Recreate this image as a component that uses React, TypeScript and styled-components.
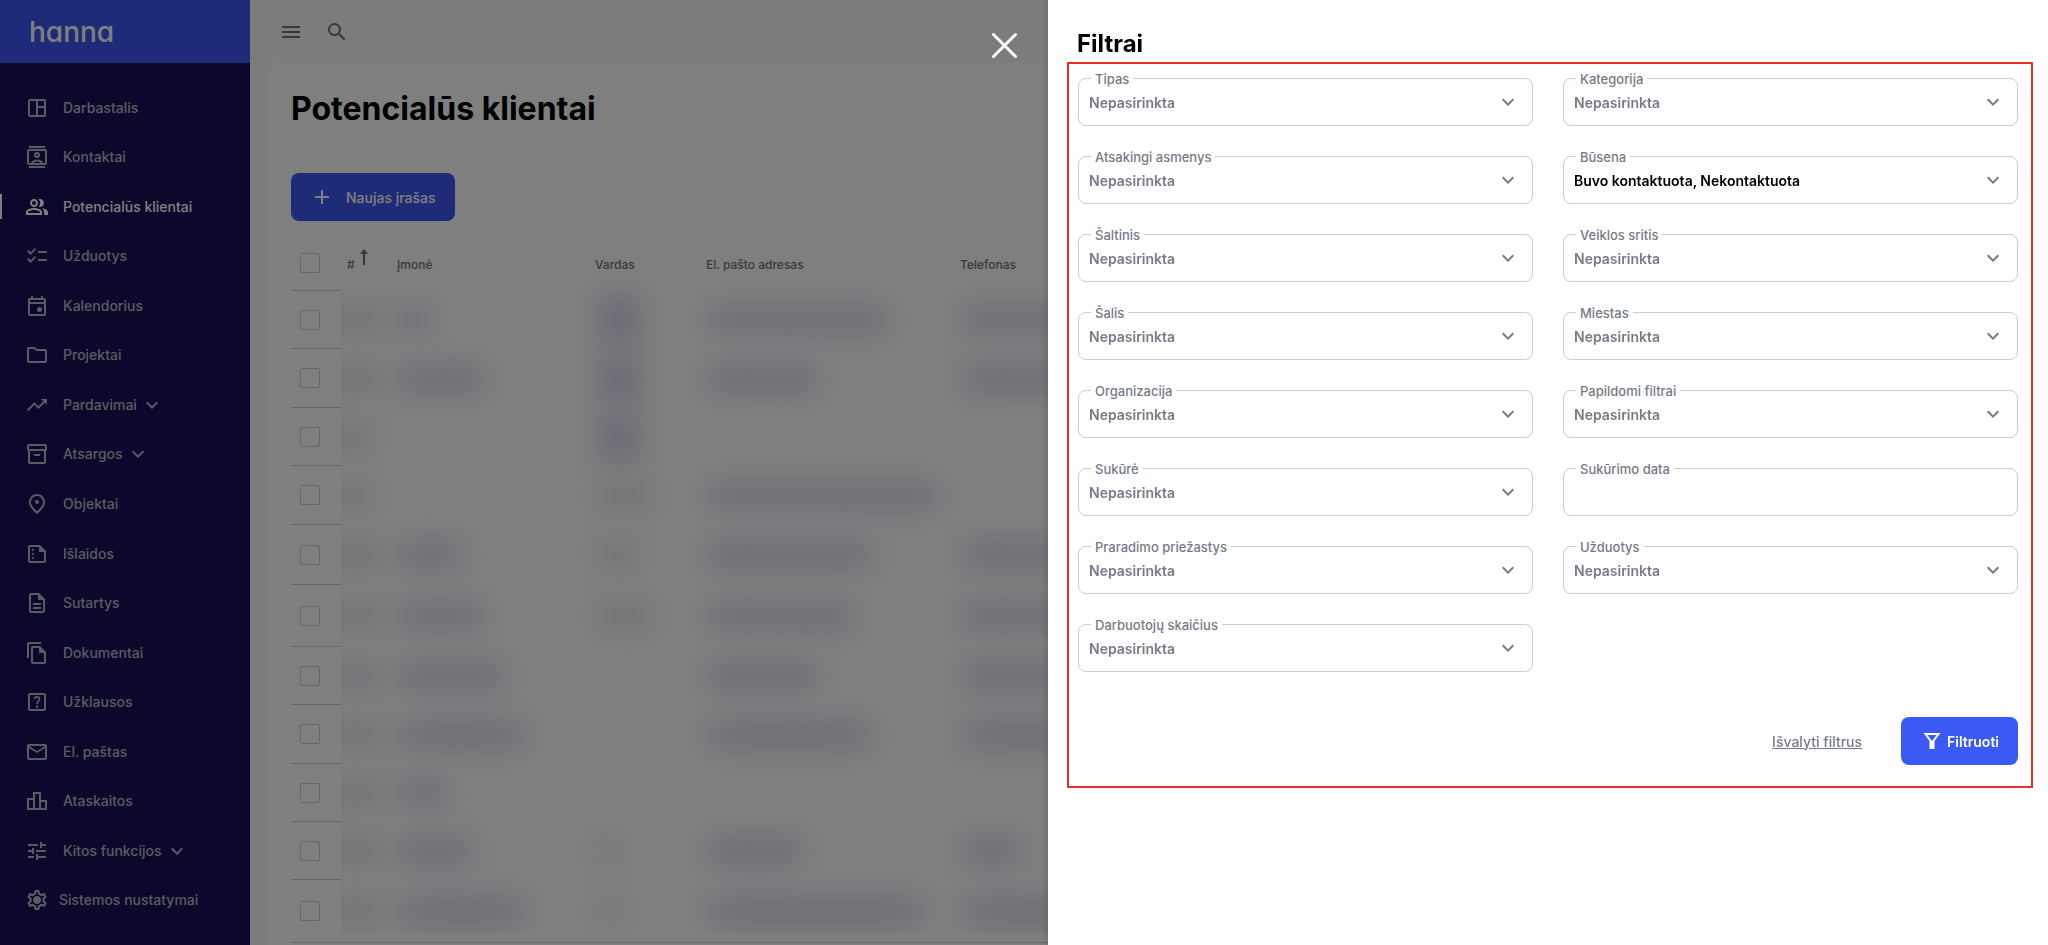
import React, { useState } from "react";
import styled, { createGlobalStyle, css } from "styled-components";
import type { IconType } from "react-icons";
import {
  MdAdd,
  MdChecklist,
  MdKeyboardArrowDown,
  MdMenu,
  MdOutlineDescription,
  MdOutlineFileCopy,
  MdOutlineFmdGood,
  MdOutlineFolder,
  MdOutlineHelpCenter,
  MdOutlineInventory2,
  MdOutlineLeaderboard,
  MdOutlineMail,
  MdOutlinePeopleAlt,
  MdOutlineSettings,
  MdOutlineSpaceDashboard,
  MdOutlineSummarize,
  MdSearch,
  MdTrendingUp,
  MdTune,
} from "react-icons/md";

const GlobalStyle = createGlobalStyle`
  *, *::before, *::after { box-sizing: border-box; }
  body {
    margin: 0;
    background: #ffffff;
    font-family: Inter, "Liberation Sans", sans-serif;
    font-size: 14px;
    color: #000000;
  }
  button, input, select { font: inherit; }
`;

/* ---------- Shell ---------- */

const Shell = styled.div`
  display: flex;
  height: 100vh;
  overflow: hidden;
  background: #f8f8f8;
`;

const Sidebar = styled.aside`
  display: flex;
  flex-direction: column;
  flex: none;
  width: 250px;
  background: #181056;
`;

const Brand = styled.a`
  display: flex;
  align-items: center;
  flex: none;
  height: 63px;
  padding: 0 29px;
  background: #3b57f0;
  color: #ffffff;
  font-size: 28px;
  font-weight: 500;
  font-feature-settings: "cv11";
  text-decoration: none;
`;

const NavList = styled.ul`
  display: flex;
  flex: 1;
  flex-direction: column;
  margin: 0;
  padding: 20px 0;
  list-style: none;
`;

const NavItem = styled.li`
  display: flex;
  flex: 1;
  align-items: center;
`;

const NavLink = styled.a<{ $active?: boolean; $tight?: boolean }>`
  display: flex;
  align-items: center;
  gap: ${(p) => (p.$tight ? 10 : 14)}px;
  width: 100%;
  height: 25px;
  padding-left: 23px;
  border-left: 2px solid ${(p) => (p.$active ? "#ffffff" : "transparent")};
  color: ${(p) => (p.$active ? "#ffffff" : "#b2b8c4")};
  font-weight: 500;
  line-height: 20px;
  text-decoration: none;

  svg { flex: none; }
`;

const NavText = styled.span`
  display: flex;
  align-items: center;
  gap: 3px;
`;

const Main = styled.main`
  display: flex;
  flex: 1;
  flex-direction: column;
  min-width: 0;
`;

const TopBar = styled.header`
  display: flex;
  flex: none;
  align-items: center;
  gap: 22px;
  height: 63px;
  padding: 0 29px;
`;

const IconButton = styled.button`
  display: flex;
  padding: 0;
  border: 0;
  background: none;
  color: #6b7078;
  cursor: pointer;
`;

const Card = styled.section`
  flex: 1;
  margin-left: 16px;
  padding: 25px 25px 0;
  border-top-left-radius: 16px;
  background: #ffffff;
`;

const PageTitle = styled.h1`
  margin: 0 0 43px;
  font-size: 32px;
  font-weight: 700;
  line-height: 42px;
`;

const NewButton = styled.button`
  display: flex;
  align-items: center;
  gap: 12px;
  height: 48px;
  padding: 0 19px;
  border: 0;
  border-radius: 8px;
  background: #3b57f0;
  color: #ffffff;
  font-weight: 500;
  cursor: pointer;
`;

/* ---------- Leads table ---------- */

const Table = styled.table`
  width: 100%;
  margin-top: 16px;
  border-collapse: separate;
  border-spacing: 0;
  table-layout: fixed;
`;

const Col = styled.col<{ $width?: number }>`
  ${(p) => p.$width && css`width: ${p.$width}px;`}
`;

const HeadCell = styled.th`
  height: 54px;
  padding: 0 6px;
  color: #6f7276;
  font-size: 12px;
  font-weight: 500;
  text-align: left;
`;

const CheckHead = styled.th`
  height: 54px;
  padding: 0 0 2px 9px;
  border-bottom: 1px solid #cfcfcf;
  text-align: left;
`;

const Sortable = styled.span`
  display: flex;
  align-items: center;
  gap: 4px;

  svg { margin-bottom: 14px; }
`;

const Row = styled.tr<{ $height: number }>`
  height: ${(p) => p.$height}px;

  &:last-child td { border-bottom: 1px solid #cfcfcf; }
`;

const CheckCell = styled.td`
  padding: 0 0 0 9px;
  border-bottom: 1px solid #cfcfcf;
`;

const Cell = styled.td`
  padding: 0;
`;

const Checkbox = styled.input`
  display: block;
  appearance: none;
  width: 20px;
  height: 20px;
  margin: 0;
  border: 1px solid #cdcdcd;
  border-radius: 2px;
`;

const Mask = styled.div<{ $first?: boolean; $last?: boolean }>`
  display: flex;
  align-items: center;
  height: 45px;
  padding-left: ${(p) => (p.$first ? 0 : 8)}px;
  clip-path: inset(-40px -60px ${(p) => (p.$last ? 0 : -40)}px ${(p) => (p.$first ? 0 : -60)}px);
`;

type SmudgeKind = "soft" | "normal" | "tall" | "edge";

const smudgeHeights: Record<SmudgeKind, number> = { soft: 28, normal: 28, tall: 52, edge: 28 };

const Smudge = styled.span<{ $width: number; $kind: SmudgeKind }>`
  flex: none;
  width: ${(p) => p.$width}px;
  height: ${(p) => smudgeHeights[p.$kind]}px;
  margin-left: ${(p) => (p.$kind === "edge" ? -16 : 0)}px;
  border-radius: 12px;
  background: ${(p) => (p.$kind === "soft" || p.$kind === "edge" ? "#e4e6ee" : "#d9dbec")};
  filter: blur(14px);
`;

/* ---------- Overlay and drawer ---------- */

const Overlay = styled.div`
  position: fixed;
  inset: 0;
  display: flex;
  align-items: flex-start;
  justify-content: flex-end;
  background: rgba(0, 0, 0, 0.5);
`;

const CloseButton = styled.button`
  display: flex;
  margin: 29px 27px 0 0;
  padding: 0;
  border: 0;
  background: none;
  cursor: pointer;
`;

const Drawer = styled.aside`
  width: 1000px;
  max-width: 100%;
  height: 100%;
  padding: 25px 15px 24px 19px;
  overflow: auto;
  background: #ffffff;
  box-shadow: 0 0 8px rgba(0, 0, 0, 0.2);
`;

const DrawerTitle = styled.h2`
  margin: 0 10px;
  font-size: 24px;
  font-weight: 700;
  line-height: 37px;
`;

const FilterForm = styled.form`
  padding: 14px 13px 21px 9px;
  border: 2px solid #e8302b;
`;

const FieldGrid = styled.div`
  display: grid;
  grid-template-columns: 1fr 1fr;
  gap: 30px;
`;

const Field = styled.div`
  position: relative;
  display: flex;
  color: #767b87;

  > svg {
    position: absolute;
    top: 12px;
    right: 13px;
    pointer-events: none;
  }
`;

const FieldLabel = styled.label`
  position: absolute;
  top: -8px;
  left: 13px;
  padding: 0 4px;
  background: #ffffff;
  color: #767b87;
  font-size: 13px;
  font-weight: 500;
  line-height: 18px;
`;

const controlStyle = css`
  width: 100%;
  height: 48px;
  padding: 0 40px 0 10px;
  appearance: none;
  border: 1px solid #cccccf;
  border-radius: 8px;
  background: #ffffff;
  font-weight: 600;
`;

const Select = styled.select<{ $filled: boolean }>`
  ${controlStyle}
  color: ${(p) => (p.$filled ? "#000000" : "#767b87")};
`;

const TextInput = styled.input`
  ${controlStyle}
  color: #000000;
`;

const Actions = styled.div`
  display: flex;
  align-items: center;
  justify-content: flex-end;
  gap: 39px;
  margin-top: 45px;
`;

const ClearLink = styled.a`
  color: #767b87;
  font-weight: 500;
  text-decoration: underline;
`;

const SubmitButton = styled.button`
  display: flex;
  align-items: center;
  gap: 3px;
  height: 48px;
  padding: 0 19px;
  border: 0;
  border-radius: 8px;
  background: #3b5af5;
  color: #ffffff;
  font-weight: 600;
  cursor: pointer;
`;

const ContactsIcon = () => (
  <svg width="24" height="24" viewBox="0 0 24 24" fill="none" stroke="currentColor" strokeWidth="2">
    <path d="M4 2h16M4 22h16" />
    <rect x="3" y="5" width="18" height="14" rx="1" />
    <circle cx="12" cy="10" r="2" />
    <path d="M6.5 19c1-2.4 3-3.6 5.500-3.600s4.500 1.200 5.500 3.600" />
  </svg>
);

const CalendarIcon = () => (
  <svg width="24" height="24" viewBox="0 0 24 24" fill="none" stroke="currentColor" strokeWidth="2">
    <rect x="4" y="5" width="16" height="16" rx="1" />
    <path d="M4 9h16M7 2v3M17 2v3" />
    <circle cx="14.500" cy="15.500" r="2.500" fill="currentColor" stroke="none" />
  </svg>
);

const GearIcon = () => (
  <svg width="24" height="24" viewBox="0 0 24 24" fill="currentColor">
    <MdOutlineSettings size={24} />
    <circle cx="12" cy="12" r="3.500" />
  </svg>
);

const FunnelIcon = () => (
  <svg width="24" height="24" viewBox="0 0 24 24" fill="currentColor" fillRule="evenodd">
    <path d="M3.500 4h17L14.500 12v8h-5v-8zM7.300 6l4.700 6 4.700-6z" />
  </svg>
);

const SortArrow = () => (
  <svg width="10" height="16" viewBox="0 0 10 16" fill="none" stroke="currentColor" strokeWidth="2">
    <path d="M5 16V2" />
    <path d="M1 5l4-5 4 5z" fill="currentColor" stroke="none" />
  </svg>
);

const CloseIcon = () => (
  <svg width="33" height="33" viewBox="0 0 33 33" stroke="#ffffff" strokeWidth="3" strokeLinecap="round">
    <path d="M5.500 5.500l22 22M27.500 5.500l-22 22" />
  </svg>
);

/* ---------- Data ---------- */

interface NavEntry {
  label: string;
  icon: IconType | React.FC;
  active?: boolean;
  expandable?: boolean;
  tight?: boolean;
}

const navEntries: NavEntry[] = [
  { label: "Darbastalis", icon: MdOutlineSpaceDashboard },
  { label: "Kontaktai", icon: ContactsIcon },
  { label: "Potencialūs klientai", icon: MdOutlinePeopleAlt, active: true },
  { label: "Užduotys", icon: MdChecklist },
  { label: "Kalendorius", icon: CalendarIcon },
  { label: "Projektai", icon: MdOutlineFolder },
  { label: "Pardavimai", icon: MdTrendingUp, expandable: true },
  { label: "Atsargos", icon: MdOutlineInventory2, expandable: true },
  { label: "Objektai", icon: MdOutlineFmdGood },
  { label: "Išlaidos", icon: MdOutlineSummarize },
  { label: "Sutartys", icon: MdOutlineDescription },
  { label: "Dokumentai", icon: MdOutlineFileCopy },
  { label: "Užklausos", icon: MdOutlineHelpCenter },
  { label: "El. paštas", icon: MdOutlineMail },
  { label: "Ataskaitos", icon: MdOutlineLeaderboard },
  { label: "Kitos funkcijos", icon: MdTune, expandable: true },
  { label: "Sistemos nustatymai", icon: GearIcon, tight: true },
];

/* Widths of the hidden values: number, company, name, e-mail, phone. */
interface LeadRow {
  height: number;
  widths: [number, number, number, number, number];
  tallName?: boolean;
}

const leadRows: LeadRow[] = [
  { height: 58, widths: [60, 30, 44, 180, 120], tallName: true },
  { height: 59, widths: [60, 84, 44, 110, 120], tallName: true },
  { height: 58, widths: [48, 0, 44, 0, 0], tallName: true },
  { height: 59, widths: [48, 0, 56, 230, 0] },
  { height: 60, widths: [60, 64, 40, 164, 120] },
  { height: 62, widths: [60, 84, 56, 146, 120] },
  { height: 58, widths: [60, 106, 0, 110, 120] },
  { height: 59, widths: [60, 126, 0, 164, 120] },
  { height: 58, widths: [60, 48, 0, 0, 0] },
  { height: 58, widths: [60, 74, 20, 94, 60] },
  { height: 63, widths: [60, 126, 24, 216, 120] },
];

const smudgeKind = (row: LeadRow, column: number): SmudgeKind => {
  if (column === 0) return "edge";
  if (column === 2) return row.tallName ? "tall" : "soft";
  return "normal";
};

interface FilterEntry {
  id: string;
  label: string;
  value?: string;
  kind?: "text";
}

const filters: FilterEntry[] = [
  { id: "tipas", label: "Tipas" },
  { id: "kategorija", label: "Kategorija" },
  { id: "asmenys", label: "Atsakingi asmenys" },
  { id: "busena", label: "Būsena", value: "Buvo kontaktuota, Nekontaktuota" },
  { id: "saltinis", label: "Šaltinis" },
  { id: "sritis", label: "Veiklos sritis" },
  { id: "salis", label: "Šalis" },
  { id: "miestas", label: "Miestas" },
  { id: "organizacija", label: "Organizacija" },
  { id: "papildomi", label: "Papildomi filtrai" },
  { id: "sukure", label: "Sukūrė" },
  { id: "data", label: "Sukūrimo data", kind: "text" },
  { id: "priezastys", label: "Praradimo priežastys" },
  { id: "uzduotys", label: "Užduotys" },
  { id: "darbuotojai", label: "Darbuotojų skaičius" },
];

/* ---------- Parts ---------- */

const Navigation = () => (
  <Sidebar>
    <Brand href="#">hanna</Brand>
    <NavList>
      {navEntries.map(({ label, icon: Icon, active, expandable, tight }) => (
        <NavItem key={label}>
          <NavLink href="#" $active={active} $tight={tight}>
            <Icon size={24} />
            <NavText>
              {label}
              {expandable && <MdKeyboardArrowDown size={24} />}
            </NavText>
          </NavLink>
        </NavItem>
      ))}
    </NavList>
  </Sidebar>
);

const LeadsTable = () => (
  <Table>
    <colgroup>
      <Col $width={50} />
      <Col $width={50} />
      <Col $width={198} />
      <Col $width={111} />
      <Col $width={254} />
      <Col />
    </colgroup>
    <thead>
      <tr>
        <CheckHead>
          <Checkbox type="checkbox" aria-label="Pažymėti visus" />
        </CheckHead>
        <HeadCell>
          <Sortable>
            #<SortArrow />
          </Sortable>
        </HeadCell>
        <HeadCell>Įmonė</HeadCell>
        <HeadCell>Vardas</HeadCell>
        <HeadCell>El. pašto adresas</HeadCell>
        <HeadCell>Telefonas</HeadCell>
      </tr>
    </thead>
    <tbody>
      {leadRows.map((row, index) => (
        <Row key={index} $height={row.height}>
          <CheckCell>
            <Checkbox type="checkbox" aria-label={`Pažymėti ${index + 1}`} />
          </CheckCell>
          {row.widths.map((width, column) => (
            <Cell key={column}>
              <Mask $first={column === 0} $last={index === leadRows.length - 1}>
                {width > 0 && <Smudge $width={width} $kind={smudgeKind(row, column)} />}
              </Mask>
            </Cell>
          ))}
        </Row>
      ))}
    </tbody>
  </Table>
);

const FilterField = ({ id, label, value, kind }: FilterEntry) => (
  <Field>
    {kind === "text" ? (
      <TextInput id={id} type="text" />
    ) : (
      <>
        <Select id={id} $filled={Boolean(value)} defaultValue={value ?? "Nepasirinkta"}>
          <option>{value ?? "Nepasirinkta"}</option>
        </Select>
        <MdKeyboardArrowDown size={24} />
      </>
    )}
    <FieldLabel htmlFor={id}>{label}</FieldLabel>
  </Field>
);

const App = () => {
  const [open, setOpen] = useState(true);

  return (
    <>
      <GlobalStyle />
      <Shell>
        <Navigation />
        <Main>
          <TopBar>
            <IconButton aria-label="Meniu">
              <MdMenu size={24} />
            </IconButton>
            <IconButton aria-label="Paieška" onClick={() => setOpen(true)}>
              <MdSearch size={24} />
            </IconButton>
          </TopBar>
          <Card>
            <PageTitle>Potencialūs klientai</PageTitle>
            <NewButton>
              <MdAdd size={24} />
              Naujas įrašas
            </NewButton>
            <LeadsTable />
          </Card>
        </Main>
      </Shell>
      {open && (
        <Overlay>
          <CloseButton aria-label="Uždaryti" onClick={() => setOpen(false)}>
            <CloseIcon />
          </CloseButton>
          <Drawer>
            <DrawerTitle>Filtrai</DrawerTitle>
            <FilterForm onSubmit={(event) => event.preventDefault()}>
              <FieldGrid>
                {filters.map((filter) => (
                  <FilterField key={filter.id} {...filter} />
                ))}
              </FieldGrid>
              <Actions>
                <ClearLink href="#">Išvalyti filtrus</ClearLink>
                <SubmitButton type="submit">
                  <FunnelIcon />
                  Filtruoti
                </SubmitButton>
              </Actions>
            </FilterForm>
          </Drawer>
        </Overlay>
      )}
    </>
  );
};

export default App;
